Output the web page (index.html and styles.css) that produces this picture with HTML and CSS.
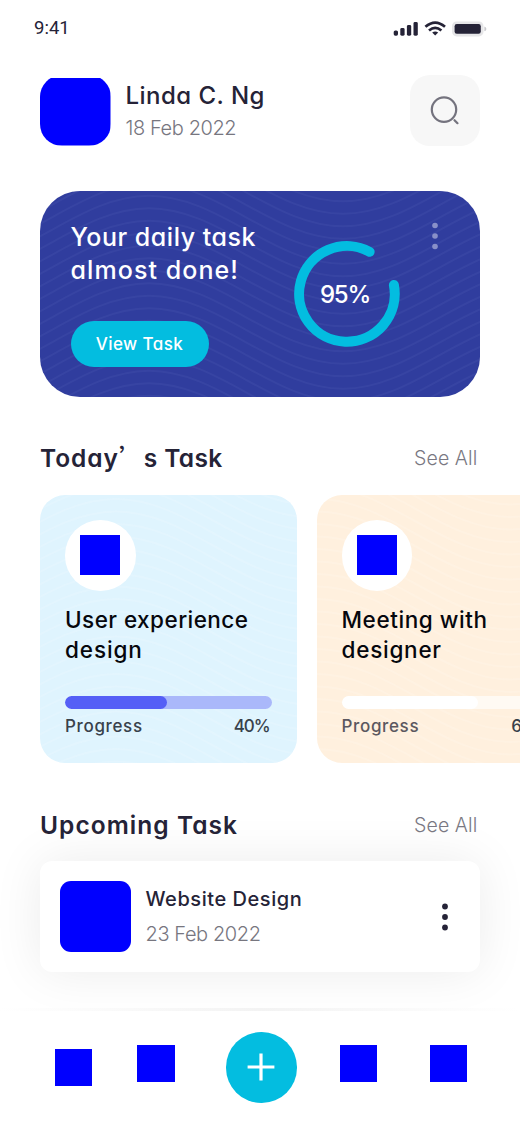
FILE: index.html
```html
<!DOCTYPE html>
<html lang="en">
<head>
<meta charset="utf-8">
<title>Daily Tasks</title>
<link rel="stylesheet" href="styles.css">
</head>
<body>
<main class="screen">
  <div class="status">
    <span class="time">9:41</span>
    <svg class="status-icons" width="94" height="16" viewBox="0 0 94 16">
      <g fill="#252337">
        <rect x="0.7" y="9.4" width="4.3" height="5.3" rx="1.6"/>
        <rect x="7.3" y="7" width="4.3" height="7.7" rx="1.4"/>
        <rect x="13.9" y="4" width="4.3" height="10.7" rx="1.4"/>
        <rect x="20.5" y="1" width="4.3" height="13.7" rx="1.4"/>
        <path d="M39.2 11.4q3-1.8 6 0l-3 3.2z"/>
      </g>
      <g fill="none" stroke="#252337" stroke-width="2.7">
        <path d="M32.4 5.8q9.8-8.4 19.6 0"/>
        <path d="M36 9.5q6.2-5.2 12.4 0"/>
      </g>
      <rect x="59" y="0.4" width="31.5" height="15" rx="4.6" fill="#e6e6e8"/>
      <rect x="61.6" y="3" width="26.2" height="9.8" rx="2.2" fill="#252337"/>
      <path d="M91.4 5.6q2 .6 2 2.3t-2 2.3z" fill="#c9c9cd"/>
    </svg>
  </div>

  <header class="header">
    <div class="avatar"></div>
    <div class="who">
      <div class="name">Linda C. Ng</div>
      <div class="date head-date">18 Feb 2022</div>
    </div>
    <button class="search" aria-label="Search">
      <svg width="30" height="30" viewBox="0 0 30 30" fill="none" stroke="#74737e" stroke-width="2.2">
        <circle cx="14" cy="14.6" r="12.2"/>
        <path d="M24.5 25.2l3 3" stroke-linecap="round"/>
      </svg>
    </button>
  </header>

  <section class="banner">
    <svg class="waves" data-x="109" data-y="4.8" data-color="#4350ab" width="440" height="206"></svg>
    <div class="banner-copy">
      <div class="banner-title"><span class="bt1">Your daily task</span><br><span class="bt2">almost done!</span></div>
      <button class="view">View Task</button>
    </div>
    <div class="ring">
      <svg width="106" height="106" viewBox="0 0 106 106">
        <path d="M75.6 10.8A47.8 47.8 0 1 0 99.9 44" fill="none" stroke="#03bde0" stroke-width="10" stroke-linecap="round"/>
      </svg>
      <span class="ring-value">95%</span>
    </div>
    <svg class="banner-dots" width="6" height="28" viewBox="0 0 6 28" fill="#8990c8">
      <circle cx="3" cy="3.5" r="2.8"/><circle cx="3" cy="14" r="2.8"/><circle cx="3" cy="24.5" r="2.8"/>
    </svg>
  </section>

  <div class="section-head">
    <h2 class="h-today"><span class="today">Today</span><span class="wide">’</span>s Task</h2>
    <a class="see">See All</a>
  </div>

  <div class="cards">
    <article class="card sky">
      <svg class="waves" data-x="76" data-y="4" data-color="#e8f7fe" width="257" height="268"></svg>
      <div class="disc"><div class="pic"></div></div>
      <h3><span class="t1">User experience</span><br><span class="t2">design</span></h3>
      <div class="bar"><div class="fill" style="width:102px"></div></div>
      <div class="row"><span class="prog">Progress</span><span class="pct">40%</span></div>
    </article>
    <article class="card peach">
      <svg class="waves" data-x="0" data-y="4" data-color="#fff5e8" width="257" height="268"></svg>
      <div class="disc"><div class="pic"></div></div>
      <h3><span class="t3">Meeting with</span><br><span class="t4">designer</span></h3>
      <div class="bar"><div class="fill" style="width:136px"></div></div>
      <div class="row"><span class="prog">Progress</span><span class="pct">65%</span></div>
    </article>
  </div>

  <div class="section-head upcoming-head">
    <h2 class="h-up">Upcoming Task</h2>
    <a class="see">See All</a>
  </div>

  <article class="item">
    <div class="thumb"></div>
    <div class="item-copy">
      <div class="item-title">Website Design</div>
      <div class="date item-date">23 Feb 2022</div>
    </div>
    <svg class="item-dots" width="6" height="28" viewBox="0 0 6 28" fill="#252337">
      <circle cx="3" cy="3.5" r="2.9"/><circle cx="3" cy="14" r="2.9"/><circle cx="3" cy="24.5" r="2.9"/>
    </svg>
  </article>

  <nav class="nav">
    <div class="tab tab-home"></div>
    <div class="tab tab-cal"></div>
    <button class="add" aria-label="Add">
      <svg width="28" height="28" viewBox="0 0 28 28" stroke="#fff" stroke-width="3.2">
        <path d="M14 .6v26.8M.6 14h26.8"/>
      </svg>
    </button>
    <div class="tab tab-chat"></div>
    <div class="tab tab-user"></div>
  </nav>
</main>
<script src="waves.js"></script>
</body>
</html>
```

FILE: styles.css
```css
* { box-sizing: border-box; }
body {
  margin: 0;
  background: #fff;
  color: #252337;
  font-family: Inter, "Open Sans", sans-serif;
  font-feature-settings: "cv11" 1;
}
button { border: 0; padding: 0; font: inherit; font-feature-settings: inherit; }
h2, h3 { margin: 0; }
svg { display: block; }

.screen { width: 520px; height: 1125px; overflow: hidden; display: flex; flex-direction: column; background: #fff; }

.status { height: 75px; padding: 18px 33px 0 34px; display: flex; justify-content: space-between; align-items: flex-start; }
.time { font: 400 18.5px/20px Roboto, sans-serif; }
.status-icons { margin-top: 3px; }

.header { height: 116px; padding: 0 40px; display: flex; align-items: flex-start; white-space: nowrap; }
.avatar { width: 70.5px; height: 70.5px; border-radius: 22px; background: #00f; clip-path: inset(3px 0 0 0); }
.who { padding: 5px 0 0 15px; flex: 1; }
.name { font-size: 24px; line-height: 32px; font-weight: 500; letter-spacing: .48px; }
.date { font-size: 20px; line-height: 28px; font-weight: 300; color: #77767f; letter-spacing: -.4px; }
.head-date { margin-top: 2px; }
.search { width: 70.5px; height: 70.5px; border-radius: 20px; background: #f7f7f7; display: flex; align-items: center; justify-content: center; }

.banner { position: relative; flex: none; height: 206px; margin: 0 40px; border-radius: 40px; background: #303d9e; overflow: hidden; display: flex; align-items: flex-start; color: #fff; white-space: nowrap; }
.waves { position: absolute; left: 0; top: 0; }
.banner-copy { position: relative; width: 254px; padding: 30px 0 0 30.5px; }
.banner-title { font-size: 25px; line-height: 32.5px; font-weight: 500; }
.bt1 { letter-spacing: .53px; }
.bt2 { letter-spacing: 1.08px; }
.view { display: block; margin-top: 35px; width: 138px; height: 45.5px; border-radius: 23px; background: #03bde0; color: #fff; font-size: 17px; font-weight: 500; letter-spacing: .45px; }
.ring { position: relative; margin-top: 50px; width: 106px; height: 106px; display: grid; place-items: center; }
.ring > * { grid-area: 1 / 1; }
.ring-value { position: relative; left: -2px; font-size: 24px; font-weight: 500; letter-spacing: -1.2px; }
.banner-dots { position: relative; margin: 31px 0 0 31.5px; }

.section-head { flex: none; height: 36px; margin: 43px 42px 0 40px; display: flex; justify-content: space-between; white-space: nowrap; }
.section-head h2 { font-size: 24.5px; line-height: 36px; font-weight: 600; }
.h-today { letter-spacing: .35px; }
.today { letter-spacing: .95px; }
.h-up { letter-spacing: 1.05px; }
.wide { font-family: "Noto Sans CJK SC", sans-serif; font-weight: 500; line-height: 1; letter-spacing: .4px; }
.see { font-size: 19.5px; line-height: 36px; color: #797882; font-weight: 350; letter-spacing: .1px; margin-right: .6px; }

.cards { flex: none; margin: 19px 0 0 40px; display: flex; gap: 20px; width: 600px; }
.card { position: relative; width: 256.5px; height: 268px; padding: 25px 25px 0; border-radius: 25px; overflow: hidden; white-space: nowrap; }
.card > :not(.waves) { position: relative; }
.sky { background: #dff4fe; }
.peach { background: #fff0de; }
.disc { width: 70.5px; height: 70.5px; border-radius: 50%; background: #fff; display: grid; place-items: center; }
.pic { width: 40px; height: 40px; background: #00f; }
.card h3 { margin-top: 14.5px; font-size: 22.5px; line-height: 30px; font-weight: 500; color: #06070d; }
.t1 { letter-spacing: .45px; }
.t2 { letter-spacing: .9px; }
.t3 { letter-spacing: .57px; }
.t4 { letter-spacing: .75px; }
.bar { margin-top: 31px; height: 12.5px; border-radius: 7px; background: #aab8fa; overflow: hidden; }
.fill { height: 100%; border-radius: 7px; background: #555ff6; }
.peach .bar { background: #fffaf3; }
.peach .fill { background: #fff; }
.row { display: flex; justify-content: space-between; margin-top: 5px; padding-right: 2px; font-size: 17px; line-height: 24px; color: #38414b; font-weight: 500; }
.prog { letter-spacing: .65px; }
.pct { letter-spacing: -1.1px; }
.peach .prog { color: #5b5860; }

.upcoming-head { position: relative; z-index: 1; margin-top: 43.5px; }
.item { flex: none; height: 110.5px; margin: 18.5px 40px 0; padding: 20px 32px 0 20px; border-radius: 12px; background: #fff; box-shadow: 0 0 50px rgba(0, 0, 0, .08); display: flex; white-space: nowrap; }
.thumb { width: 70.5px; height: 70.5px; border-radius: 11px; background: #00f; }
.item-copy { flex: 1; padding: 3px 0 0 15px; }
.item-title { font-size: 20px; line-height: 30px; font-weight: 500; letter-spacing: .55px; }
.item-date { margin-top: 6px; }
.item-dots { margin-top: 22px; }

.nav { position: relative; flex: none; height: 117px; margin-top: 36.5px; padding-left: 55px; display: flex; align-items: flex-start; background: linear-gradient(90deg, #fff, #f3f3f3 50%, #fff) 0 0 / 100% 3px no-repeat #fff; }
.tab { width: 37px; height: 37px; margin-top: 37px; background: #00f; }
.tab-home { margin-top: 41px; }
.tab-cal { width: 38px; margin-left: 45px; }
.add { width: 70.5px; height: 70.5px; margin: 24px 0 0 51px; border-radius: 50%; background: #03bde0; display: grid; place-items: center; }
.tab-chat { margin-left: 43.5px; }
.tab-user { margin-left: 53px; }
```

FILE: waves.js
```js
// Fills each .waves svg with evenly spaced sine-like lines.
// data-x / data-y: position of one crest.
const HALF = 194, AMP = 34, STEP = 12.5;
document.querySelectorAll('.waves').forEach(svg => {
  const h = +svg.getAttribute('height');
  let d = '';
  for (let y = +svg.dataset.y - STEP * 8; y < h + STEP; y += STEP) {
    let x = +svg.dataset.x - HALF * 2;
    d += `M${x} ${y}`;
    for (let i = 0; i < 6; i++) {
      const to = i % 2 ? -2 * AMP : 2 * AMP;
      d += `c${HALF * 0.364} 0 ${HALF * 0.636} ${to} ${HALF} ${to}`;
    }
  }
  const p = document.createElementNS('http://www.w3.org/2000/svg', 'path');
  p.setAttribute('d', d);
  p.setAttribute('fill', 'none');
  p.setAttribute('stroke', svg.dataset.color);
  p.setAttribute('stroke-width', '2');
  p.setAttribute('stroke-opacity', '.4');
  svg.appendChild(p);
});
```
